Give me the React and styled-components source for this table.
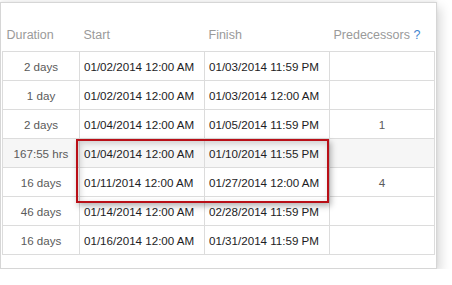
import React from 'react'
import styled, { createGlobalStyle } from 'styled-components'

const Global = createGlobalStyle`
  html, body { margin:0; padding:0; background:#fff; }
  body { font-family:"Liberation Sans", Arial, sans-serif; }
`;

const Panel = styled.div`
  position:relative;
  margin-top:2px;
  width:437px;
  box-sizing:border-box;
  border:1px solid #d6d6d6;
  padding:0 1px 13px 1px;
  background:#fff;
  box-shadow:4px 5px 10px rgba(0,0,0,0.14), 0 -2px 3px rgba(0,0,0,0.06);
`;

const Grid = styled.table`
  width:432px;
  border-collapse:collapse;
  table-layout:fixed;
`;

const Head = styled.th`
  height:39px;
  padding:0 4px 9px 4px;
  vertical-align:bottom;
  text-align:left;
  font-weight:normal;
  font-size:12.5px;
  color:#9a9a9a;
  border-bottom:1px solid #dcdcdc;
`;

const Help = styled.span`
  color:#3f86cf;
`;

const Row = styled.tr`
  background:${p => (p.$shaded ? '#f6f6f6' : '#fff')};
`;

const Cell = styled.td`
  height:28px;
  padding:0 4px;
  border:1px solid #dcdcdc;
  font-size:11.6px;
  white-space:nowrap;
  text-align:${p => (p.$center ? 'center' : 'left')};
  color:${p => (p.$muted ? '#5a5a5a' : '#1c1c24')};
`;

const Highlight = styled.div`
  position:absolute;
  left:75px;
  top:136px;
  width:253px;
  height:64px;
  box-sizing:border-box;
  border:2px solid #b90f17;
  box-shadow:2px 3px 6px rgba(0,0,0,0.3), inset 2px 2px 6px rgba(0,0,0,0.18);
  pointer-events:none;
`;

const rows = [
  { dur: '2 days', start: '01/02/2014 12:00 AM', finish: '01/03/2014 11:59 PM', pred: '' },
  { dur: '1 day', start: '01/02/2014 12:00 AM', finish: '01/03/2014 12:00 AM', pred: '' },
  { dur: '2 days', start: '01/04/2014 12:00 AM', finish: '01/05/2014 11:59 PM', pred: '1' },
  { dur: '167:55 hrs', start: '01/04/2014 12:00 AM', finish: '01/10/2014 11:55 PM', pred: '', shaded: true },
  { dur: '16 days', start: '01/11/2014 12:00 AM', finish: '01/27/2014 12:00 AM', pred: '4' },
  { dur: '46 days', start: '01/14/2014 12:00 AM', finish: '02/28/2014 11:59 PM', pred: '' },
  { dur: '16 days', start: '01/16/2014 12:00 AM', finish: '01/31/2014 11:59 PM', pred: '' },
];

const App = () => {
  return (
    <>
      <Global />
      <Panel>
        <Grid>
          <colgroup>
            <col style={{ width: 77 }} />
            <col style={{ width: 125 }} />
            <col style={{ width: 125 }} />
            <col style={{ width: 105 }} />
          </colgroup>
          <thead>
            <tr>
              <Head>Duration</Head>
              <Head>Start</Head>
              <Head>Finish</Head>
              <Head>Predecessors <Help>?</Help></Head>
            </tr>
          </thead>
          <tbody>
            {rows.map((r, i) => (
              <Row key={i} $shaded={r.shaded}>
                <Cell $center $muted>{r.dur}</Cell>
                <Cell>{r.start}</Cell>
                <Cell>{r.finish}</Cell>
                <Cell $center $muted>{r.pred}</Cell>
              </Row>
            ))}
          </tbody>
        </Grid>
        <Highlight />
      </Panel>
    </>
  )
}

export default App
